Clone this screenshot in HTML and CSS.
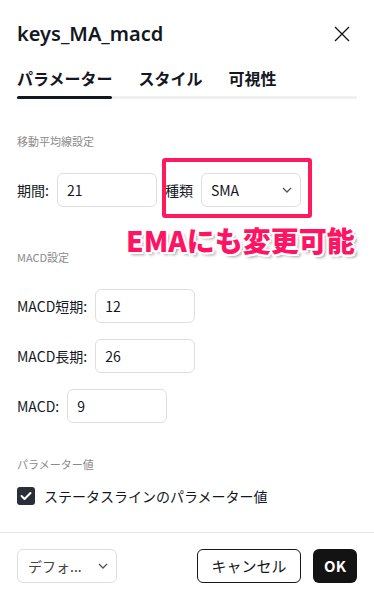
FILE: index.html
```html
<!DOCTYPE html>
<html lang="ja">
<head>
<meta charset="utf-8">
<title>keys_MA_macd</title>
<link rel="stylesheet" href="styles.css">
</head>
<body>
<div class="dialog">
  <div class="header">
    <div class="title">keys_MA_macd</div>
    <svg class="close" width="16" height="16" viewBox="0 0 16 16"><path d="M1 1L15 15M15 1L1 15" stroke="#131722" stroke-width="1.4" fill="none"/></svg>
  </div>
  <div class="tabs">
    <div class="tab active">パラメーター</div>
    <div class="tab">スタイル</div>
    <div class="tab">可視性</div>
  </div>
  <div class="track"><div class="track-fill"></div></div>

  <div class="section-label first">移動平均線設定</div>
  <div class="row">
    <span class="label">期間:</span>
    <div class="input">21</div>
    <span class="label">種類</span>
    <div class="select">SMA<svg class="chev" width="10" height="6" viewBox="0 0 10 6"><path d="M1 1L5 5L9 1" stroke="#555" stroke-width="1.3" fill="none"/></svg></div>
  </div>

  <div class="section-label">MACD設定</div>
  <div class="rows">
    <div class="row"><span class="label">MACD短期:</span><div class="input">12</div></div>
    <div class="row"><span class="label">MACD長期:</span><div class="input">26</div></div>
    <div class="row"><span class="label">MACD:</span><div class="input">9</div></div>
  </div>

  <div class="section-label last">パラメーター値</div>
  <div class="check-row">
    <span class="checkbox"><svg width="12" height="10" viewBox="0 0 12 10"><path d="M1.5 5L4.5 8L10.5 2" stroke="#fff" stroke-width="2" fill="none" stroke-linecap="round" stroke-linejoin="round"/></svg></span>
    <span class="check-label">ステータスラインのパラメーター値</span>
  </div>

  <div class="divider"></div>
  <div class="footer">
    <div class="select footer-select">デフォ...<svg class="chev" width="10" height="6" viewBox="0 0 10 6"><path d="M1 1L5 5L9 1" stroke="#555" stroke-width="1.3" fill="none"/></svg></div>
    <div class="spacer"></div>
    <button class="btn cancel">キャンセル</button>
    <button class="btn ok">OK</button>
  </div>

  <div class="annot-box"></div>
  <div class="annot-text">EMAにも変更可能</div>
</div>
</body>
</html>
```

FILE: styles.css
```css
* { box-sizing: border-box; }
html, body { margin: 0; padding: 0; background: #fff; }
body {
  font-family: "Noto Sans CJK JP", "Noto Sans", sans-serif;
  color: #131722;
}
.dialog {
  position: relative;
  width: 374px;
  height: 595px;
  padding: 0 17px;
  overflow: hidden;
}
.header {
  height: 68px;
  display: flex;
  align-items: center;
  justify-content: space-between;
}
.title {
  font-family: "Noto Sans", "Noto Sans CJK JP", sans-serif;
  font-size: 20px;
  font-weight: 600;
  line-height: 24px;
}
.close { margin-right: 7px; }
.tabs {
  display: flex;
  gap: 26px;
}
.tab {
  font-size: 16px;
  font-weight: 700;
  line-height: 20px;
}
.track {
  margin-top: 8px;
  height: 3px;
  border-radius: 2px;
  background: #f0f0f0;
}
.track-fill {
  width: 95px;
  height: 3px;
  border-radius: 2px;
  background: #131722;
}
.section-label {
  margin-top: 42px;
  font-size: 11px;
  line-height: 16px;
  color: #8a8a8a;
}
.section-label.first { margin-top: 34px; }
.section-label.last { margin-top: 33px; }
.row {
  margin-top: 24px;
  display: flex;
  align-items: center;
  gap: 8px;
}
.rows .row + .row { margin-top: 16px; }
.label {
  font-size: 14px;
  line-height: 20px;
}
.input, .select {
  width: 100px;
  height: 34px;
  border: 1px solid #dedede;
  border-radius: 6px;
  padding: 0 9px;
  display: flex;
  align-items: center;
  font-size: 14px;
}
.select { justify-content: space-between; padding-right: 8px; }
.check-row {
  margin-top: 14px;
  display: flex;
  align-items: center;
  gap: 9px;
  height: 20px;
}
.checkbox {
  width: 18px;
  height: 18px;
  border-radius: 3px;
  background: #2a2e39;
  display: flex;
  align-items: center;
  justify-content: center;
}
.check-label { font-size: 14px; line-height: 20px; }
.divider {
  margin: 26px -17px 0;
  height: 1px;
  background: #e6e6e6;
}
.footer {
  margin-top: 16px;
  display: flex;
  align-items: center;
}
.footer-select { color: #444; padding-left: 10px; }
.spacer { flex: 1; }
.btn {
  height: 34px;
  border-radius: 6px;
  font-family: "Noto Sans CJK JP", "Noto Sans", sans-serif;
  font-size: 15px;
  line-height: 20px;
  cursor: pointer;
}
.cancel {
  width: 104px;
  background: #fff;
  border: 1px solid #131722;
  color: #131722;
  padding: 0;
}
.ok {
  margin-left: 12px;
  width: 44px;
  background: #131313;
  border: none;
  color: #fff;
  font-weight: 700;
  padding: 0;
}
.annot-box {
  position: absolute;
  left: 162px;
  top: 158px;
  width: 150px;
  height: 60px;
  border: 4px solid #ff1a5e;
  border-radius: 3px;
}
.annot-text {
  position: absolute;
  left: 126px;
  top: 223px;
  font-size: 28px;
  line-height: 34px;
  font-weight: 900;
  color: #ff1464;
  white-space: nowrap;
  text-shadow:
    2px 0 0 #fff, -2px 0 0 #fff, 0 2px 0 #fff, 0 -2px 0 #fff,
    1.5px 1.5px 0 #fff, -1.5px -1.5px 0 #fff, 1.5px -1.5px 0 #fff, -1.5px 1.5px 0 #fff,
    3px 3px 3px rgba(0,0,0,0.35);
}
```
